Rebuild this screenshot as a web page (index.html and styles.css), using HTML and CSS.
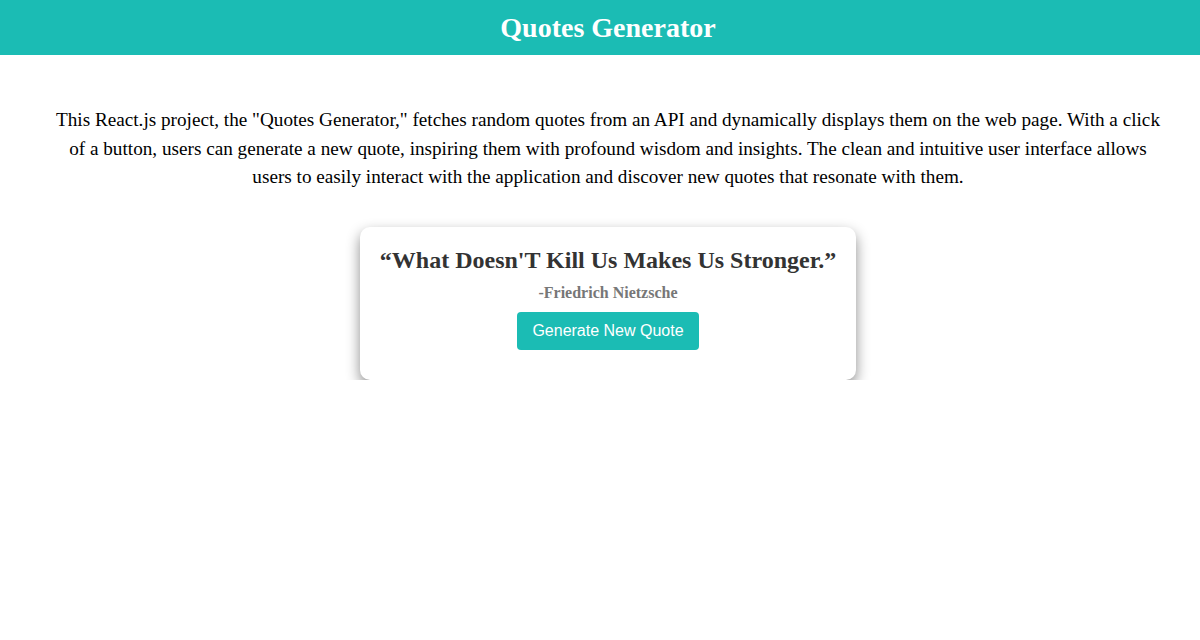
FILE: index.html
```html
<!DOCTYPE html>
<html>
<head>
<meta charset="utf-8">
<link rel="stylesheet" href="styles.css">
</head>
<body>
<header class="top-bar">
  <h1 class="title">Quotes Generator</h1>
</header>
<main class="content">
  <p class="intro">This React.js project, the "Quotes Generator," fetches random quotes from an API and dynamically displays them on the web page. With a click of a button, users can generate a new quote, inspiring them with profound wisdom and insights. The clean and intuitive user interface allows users to easily interact with the application and discover new quotes that resonate with them.</p>
  <div class="card">
    <h2 class="quote">“What Doesn'T Kill Us Makes Us Stronger.”</h2>
    <p class="author">-Friedrich Nietzsche</p>
    <button class="btn">Generate New Quote</button>
  </div>
</main>
</body>
</html>
```

FILE: styles.css
```css
html, body {
  margin: 0;
  padding: 0;
  background: #fff;
}
body {
  font-family: "Liberation Serif", "Times New Roman", serif;
}
.top-bar {
  background: #1bbcb4;
  height: 55px;
  display: flex;
  align-items: center;
  justify-content: center;
  padding-left: 16px;
}
.title {
  margin: 0;
  color: #fff;
  font-size: 28px;
  font-weight: bold;
}
.content {
  display: flex;
  flex-direction: column;
  align-items: center;
  padding: 0 38px 0 54px;
}
.intro {
  margin: 51px 0 35px;
  font-size: 19.2px;
  line-height: 28.6px;
  text-align: center;
  color: #000;
}
.card {
  width: 456px;
  padding: 19px 20px 30px;
  background: #fff;
  border-radius: 10px;
  box-shadow: 0 6px 14px rgba(0, 0, 0, 0.45);
  display: flex;
  flex-direction: column;
  align-items: center;
}
.quote {
  margin: 0;
  font-size: 24px;
  line-height: 28px;
  color: #333;
  text-align: center;
  white-space: nowrap;
}
.author {
  margin: 10px 0 10px;
  font-size: 16px;
  font-weight: bold;
  color: #777;
}
.btn {
  background: #1bbcb4;
  color: #fff;
  border: none;
  border-radius: 4px;
  font-family: "Liberation Sans", Arial, sans-serif;
  font-size: 16px;
  padding: 0 15px;
  height: 38px;
}
```
